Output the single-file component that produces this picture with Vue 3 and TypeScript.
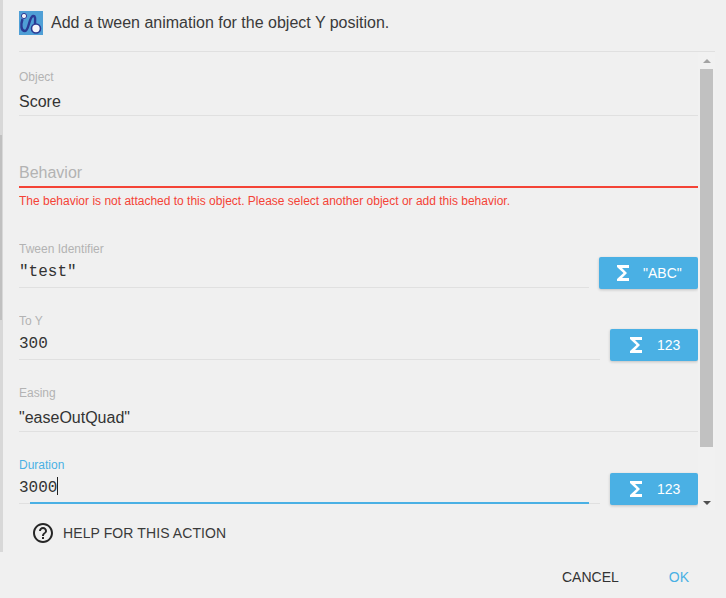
<script setup lang="ts">
interface Field {
  label: string
  value: string
  mono?: boolean
  button?: string
  focus?: boolean
  top: number
}
const fields: Field[] = [
  { label: 'Tween Identifier', value: '"test"', mono: true, button: '"ABC"', top: 34 },
  { label: 'To Y', value: '300', mono: true, button: '123', top: 26 },
  { label: 'Easing', value: '"easeOutQuad"', top: 26 },
  { label: 'Duration', value: '3000', mono: true, button: '123', focus: true, top: 27 },
]
</script>

<template>
  <div class="page">
    <div class="edge"><div class="edge-dark"></div></div>
    <div class="dialog">
      <header class="head">
        <svg class="logo" width="24" height="24" viewBox="0 0 24 24">
          <rect width="24" height="24" fill="#4f9fd6" />
          <path d="M3.500 8C1.500 14 2 20 6 20C10 20 10 6 14 5C17 4.500 16 9 16 13" fill="none" stroke="#2b3a94" stroke-width="2.400" />
          <circle cx="5" cy="5" r="2.600" fill="#f2f2f8" stroke="#2b3a94" />
          <circle cx="17" cy="17.500" r="4.500" fill="#f4f4fa" stroke="#2b3a94" stroke-width="1.600" />
        </svg>
        <span>Add a tween animation for the object Y position.</span>
      </header>
      <div class="main">
        <div class="form">
          <div class="field object">
            <label>Object</label>
            <div class="value">Score</div>
          </div>
          <div class="behavior">
            <div class="placeholder">Behavior</div>
            <p>The behavior is not attached to this object. Please select another object or add this behavior.</p>
          </div>
          <div v-for="f in fields" :key="f.label" class="row" :style="{ marginTop: f.top + 'px' }">
            <div class="field" :class="{ focus: f.focus }">
              <label>{{ f.label }}</label>
              <div class="value" :class="{ mono: f.mono }">{{ f.value }}<i v-if="f.focus" class="caret"></i></div>
            </div>
            <button v-if="f.button" class="expr" :class="{ wide: f.button !== '123' }">
              <svg width="24" height="24" viewBox="0 0 24 24"><path d="M18 4H6v2l6.500 6L6 18v2h12v-3h-7l5-5-5-5h7z" fill="#fff" /></svg>
              <span>{{ f.button }}</span>
            </button>
          </div>
        </div>
        <div class="scrollbar">
          <i class="up"></i>
          <div class="thumb"></div>
          <i class="down"></i>
        </div>
      </div>
      <div class="help">
        <svg width="24" height="24" viewBox="0 0 24 24"><path d="M11 18h2v-2h-2v2zm1-16C6.480 2 2 6.480 2 12s4.480 10 10 10 10-4.480 10-10S17.520 2 12 2zm0 18c-4.410 0-8-3.590-8-8s3.590-8 8-8 8 3.590 8 8-3.590 8-8 8zm0-14c-2.210 0-4 1.790-4 4h2c0-1.100.9-2 2-2s2 .9 2 2c0 2-3 1.750-3 5h2c0-2.250 3-2.500 3-5 0-2.210-1.790-4-4-4z" fill="#262626" /></svg>
        <span>HELP FOR THIS ACTION</span>
      </div>
      <footer class="actions">
        <span class="cancel">CANCEL</span>
        <span class="ok">OK</span>
      </footer>
    </div>
  </div>
</template>

<style>
html, body { margin: 0; background: #f0f0f0; }
</style>

<style scoped>
.page {
  width: 726px;
  height: 598px;
  display: flex;
  overflow: hidden;
  background: #f0f0f0;
  font-family: "Liberation Sans", Arial, sans-serif;
  color: #333;
}
.edge {
  width: 3px;
  height: 552px;
  background: #d8d8d8;
  flex: none;
  overflow: hidden;
}
.edge-dark {
  width: 2px;
  height: 185px;
  margin-top: 135px;
  background: #c0c0c0;
}
.dialog {
  flex: 1;
  min-width: 0;
  display: flex;
  flex-direction: column;
  padding-left: 16px;
  padding-right: 11px;
}
.head {
  flex: none;
  display: flex;
  align-items: center;
  gap: 8px;
  height: 46px;
  padding-bottom: 5px;
  border-bottom: 1px solid #e0e0e0;
  font-size: 16px;
  color: #3a3a3a;
}
.logo { flex: none; }
.main {
  height: 458px;
  flex: none;
  display: flex;
  overflow: hidden;
}
.form {
  width: 679px;
  flex: none;
  padding-top: 19px;
}
.field {
  flex: 1;
  min-width: 0;
  height: 44px;
  border-bottom: 1px solid #e0e0e0;
  position: relative;
}
.field label {
  display: block;
  font-size: 12px;
  line-height: 12px;
  color: #b3b3b3;
}
.field.focus label { color: #4ab0e4; }
.value {
  margin-top: 7px;
  font-size: 16px;
  line-height: 24px;
  color: #333;
}
.mono {
  margin-top: 5px;
  font-family: "Liberation Mono", monospace;
  font-size: 16px;
}
.caret {
  display: inline-block;
  width: 1px;
  height: 18px;
  background: #222;
  vertical-align: -3px;
}
.field.focus::after {
  content: "";
  position: absolute;
  left: 11px;
  right: 11px;
  bottom: -1px;
  height: 2px;
  background: #4ab0e4;
}
.behavior { margin-top: 45px; }
.placeholder {
  height: 25px;
  line-height: 24px;
  font-size: 16px;
  color: #b3b3b3;
  border-bottom: 2px solid #f44336;
}
.behavior p {
  margin: 5px 0 0;
  font-size: 12px;
  line-height: 16px;
  color: #f44336;
}
.row {
  display: flex;
  align-items: flex-start;
  gap: 10px;
}
.expr {
  flex: none;
  width: 88px;
  height: 32px;
  margin-top: 14px;
  padding: 0 0 0 14px;
  border: 0;
  border-radius: 2px;
  display: flex;
  align-items: center;
  gap: 9px;
  background: #4ab0e4;
  color: #fff;
  font-family: inherit;
  font-size: 14px;
  box-shadow: 0 1px 3px rgba(0, 0, 0, 0.2);
}
.expr.wide {
  width: 99px;
  padding-left: 12px;
  gap: 8px;
}
.scrollbar {
  width: 17px;
  flex: none;
  height: 458px;
  background: #f1f1f1;
  display: flex;
  flex-direction: column;
  align-items: center;
}
.thumb {
  width: 13px;
  height: 378px;
  margin-top: 6px;
  background: #c1c1c1;
}
.up, .down {
  width: 0;
  height: 0;
  border-left: 4px solid transparent;
  border-right: 4px solid transparent;
}
.up {
  margin-top: 7px;
  border-bottom: 4px solid #a3a3a3;
}
.down {
  margin-top: 54px;
  border-top: 4px solid #505050;
}
.help {
  height: 46px;
  flex: none;
  display: flex;
  align-items: center;
  gap: 8px;
  padding-left: 12px;
  font-size: 14px;
  letter-spacing: 0.1px;
  color: #3a3a3a;
}
.actions {
  flex: 1;
  display: flex;
  justify-content: flex-end;
  align-items: center;
  font-size: 14px;
  padding-right: 26px;
  gap: 50px;
}
.ok { color: #4ab0e4; }
</style>
